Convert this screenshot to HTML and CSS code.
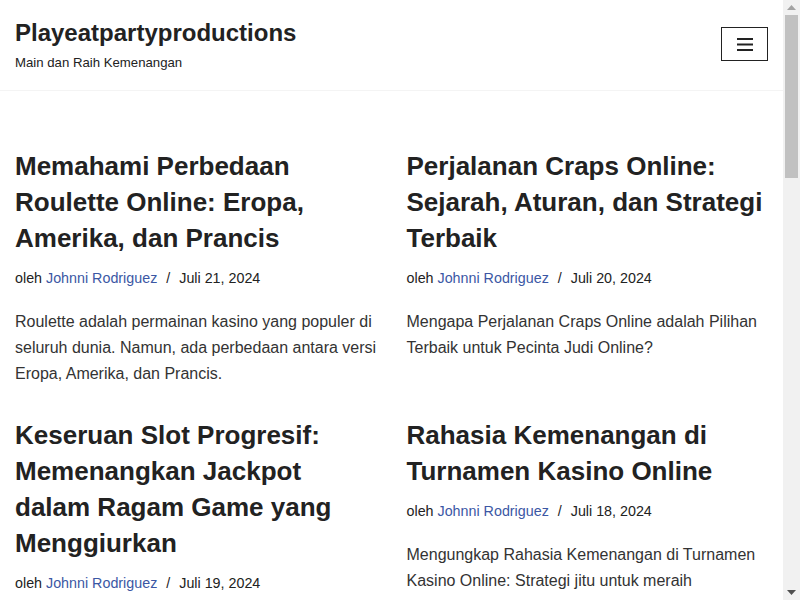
FILE: index.html
```html
<!DOCTYPE html>
<html lang="id">
<head>
  <meta charset="UTF-8" />
  <meta name="viewport" content="width=device-width, initial-scale=1.0" />
  <title>Playeatpartyproductions</title>
  <link rel="stylesheet" href="styles.css">
</head>
<body>
  <div class="window">
    <div class="page">
      <header class="site-header">
        <div class="brand">
          <div class="site-title">Playeatpartyproductions</div>
          <div class="site-tagline">Main dan Raih Kemenangan</div>
        </div>
        <button class="menu-toggle" aria-label="Menu">
          <svg width="16" height="13" viewBox="0 0 16 13">
            <rect x="0" y="0" width="16" height="2" fill="#222"/>
            <rect x="0" y="5.5" width="16" height="2" fill="#222"/>
            <rect x="0" y="11" width="16" height="2" fill="#222"/>
          </svg>
        </button>
      </header>

      <main class="posts">
        <article class="post">
          <h2 class="post-title">Memahami Perbedaan Roulette Online: Eropa, Amerika, dan Prancis</h2>
          <div class="post-meta">oleh <a href="#">Johnni Rodriguez</a> <span class="sep">/</span> Juli 21, 2024</div>
          <p class="excerpt">Roulette adalah permainan kasino yang populer di seluruh dunia. Namun, ada perbedaan antara versi Eropa, Amerika, dan Prancis.</p>
        </article>
        <article class="post">
          <h2 class="post-title">Perjalanan Craps Online: Sejarah, Aturan, dan Strategi Terbaik</h2>
          <div class="post-meta">oleh <a href="#">Johnni Rodriguez</a> <span class="sep">/</span> Juli 20, 2024</div>
          <p class="excerpt">Mengapa Perjalanan Craps Online adalah Pilihan Terbaik untuk Pecinta Judi Online?</p>
        </article>
        <article class="post">
          <h2 class="post-title">Keseruan Slot Progresif: Memenangkan Jackpot dalam Ragam Game yang Menggiurkan</h2>
          <div class="post-meta">oleh <a href="#">Johnni Rodriguez</a> <span class="sep">/</span> Juli 19, 2024</div>
          <p class="excerpt">Slot progresif menawarkan jackpot yang terus bertambah setiap kali pemain memasang taruhan.</p>
        </article>
        <article class="post">
          <h2 class="post-title">Rahasia Kemenangan di Turnamen Kasino Online</h2>
          <div class="post-meta">oleh <a href="#">Johnni Rodriguez</a> <span class="sep">/</span> Juli 18, 2024</div>
          <p class="excerpt">Mengungkap Rahasia Kemenangan di Turnamen Kasino Online: Strategi jitu untuk meraih kemenangan besar.</p>
        </article>
      </main>
    </div>

    <div class="scrollbar" aria-hidden="true">
      <div class="scroll-arrow">
        <svg width="9" height="5" viewBox="0 0 9 5"><polygon points="0,5 9,5 4.5,0" fill="#a3a3a3"/></svg>
      </div>
      <div class="scroll-track">
        <div class="scroll-thumb"></div>
      </div>
      <div class="scroll-arrow">
        <svg width="9" height="5" viewBox="0 0 9 5"><polygon points="0,0 9,0 4.5,5" fill="#505050"/></svg>
      </div>
    </div>
  </div>
</body>
</html>
```

FILE: styles.css
```css
body {
  margin: 0;
  font-family: "Liberation Sans", Arial, sans-serif;
  color: #404248;
  background: #fff;
  overflow: hidden;
}
a {
  color: #3b57a4;
  text-decoration: none;
}
.window {
  display: flex;
  height: 100vh;
  overflow: hidden;
}
.page {
  flex: 1;
  min-width: 0;
}

/* header */
.site-header {
  display: flex;
  justify-content: space-between;
  align-items: center;
  padding: 18px 15px 18px;
  border-bottom: 1px solid #f4f4f4;
}
.site-title {
  font-size: 24px;
  font-weight: bold;
  color: #222;
  line-height: 30px;
}
.site-tagline {
  margin-top: 6px;
  font-size: 13.2px;
  color: #222;
  line-height: 18px;
}
.menu-toggle {
  width: 47px;
  height: 34px;
  margin-bottom: 2px;
  border: 1px solid #222;
  background: #fff;
  padding: 0;
  display: flex;
  align-items: center;
  justify-content: center;
}

/* posts */
.posts {
  display: grid;
  grid-template-columns: 1fr 1fr;
  padding: 57px 0 0;
}
.post {
  padding: 0 15px 30px;
}
.post-title {
  margin: 0 0 12px;
  font-size: 26px;
  line-height: 36px;
  font-weight: bold;
  color: #222;
}
.post-meta {
  font-size: 14.3px;
  line-height: 20px;
  color: #222;
}
.post-meta .sep {
  margin: 0 5px;
}
.excerpt {
  margin: 21px 0 0;
  font-size: 16px;
  line-height: 26px;
  color: #333;
}

/* scrollbar */
.scrollbar {
  width: 17px;
  flex-shrink: 0;
  background: #f1f1f1;
  display: flex;
  flex-direction: column;
}
.scroll-arrow {
  height: 15px;
  display: flex;
  align-items: center;
  justify-content: center;
}
.scroll-track {
  flex: 1;
  padding: 0 2px;
}
.scroll-thumb {
  height: 163px;
  background: #c1c1c1;
}
```
